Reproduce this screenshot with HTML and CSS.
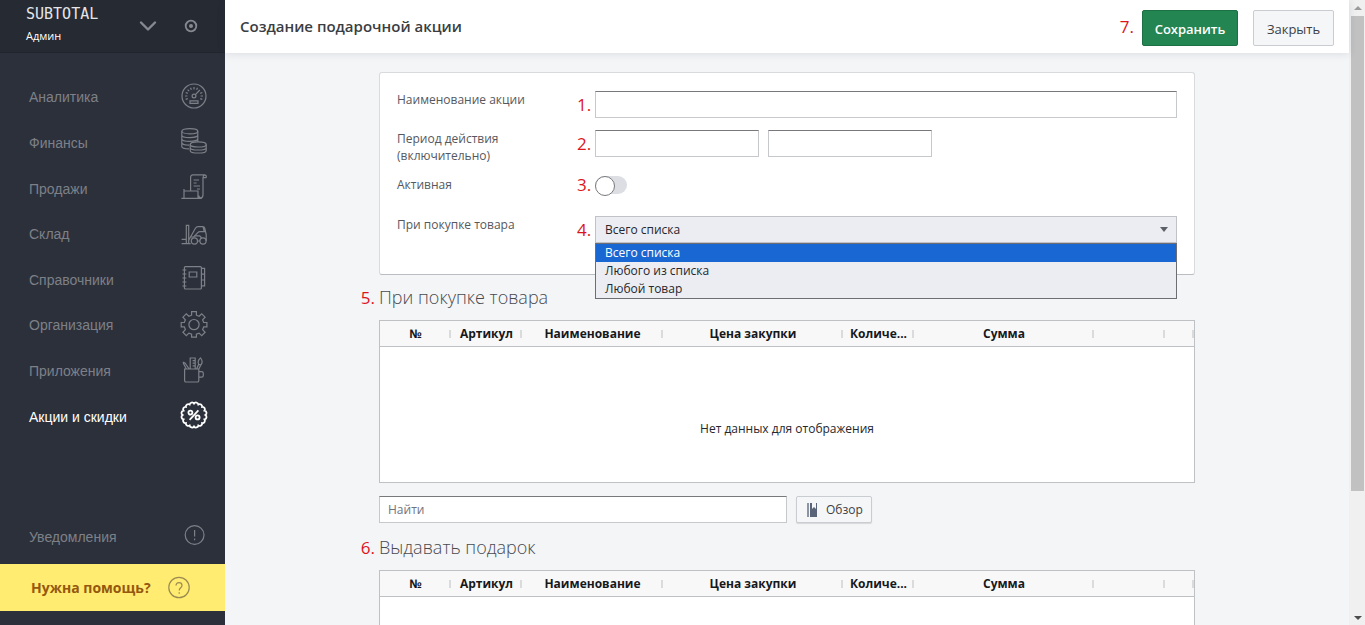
FILE: index.html
```html
<!DOCTYPE html>
<html lang="ru">
<head>
<meta charset="utf-8">
<meta name="viewport" content="width=device-width, initial-scale=1">
<title>Создание подарочной акции</title>
<link rel="stylesheet" href="styles.css">
</head>
<body>
<div class="app">
  <aside class="sidebar">
    <div class="account">
      <div class="account-name">
        <span class="brand">SUBTOTAL</span>
        <span class="user">Админ</span>
      </div>
      <button class="icon-button" type="button" aria-label="Меню аккаунта">
        <svg width="18" height="12" viewBox="0 0 18 12"><path d="M2 2.5l7 7 7-7" fill="none" stroke="currentColor" stroke-width="2.4" stroke-linecap="round" stroke-linejoin="round"/></svg>
      </button>
      <button class="icon-button" type="button" aria-label="Статус">
        <svg width="14" height="14" viewBox="0 0 14 14"><circle cx="7" cy="7" r="5.3" fill="none" stroke="currentColor" stroke-width="1.8"/><circle cx="7" cy="7" r="2" fill="currentColor"/></svg>
      </button>
    </div>
    <nav class="menu">
      <a class="menu-item" href="#">Аналитика
        <svg class="menu-icon" viewBox="0 0 28 28"><circle cx="14" cy="14" r="12"/><circle cx="14" cy="14" r="1.9"/><path d="M15.4 12.6l4.4-4.6M10 18.8h8v2.6h-8zM5 14h2.4M20.6 14H23M14 5v2.4M7.6 7.6l1.6 1.6M5.7 10.5l2.1.9M10.5 5.7l.9 2.1M17.5 5.7l-.9 2.1M22.3 10.5l-2.1.9M5.7 17.4l2.1-.8M22.3 17.4l-2.1-.8"/></svg>
      </a>
      <a class="menu-item" href="#">Финансы
        <svg class="menu-icon" viewBox="0 0 28 28"><ellipse cx="9.8" cy="4.2" rx="8" ry="2.6"/><path d="M1.8 4.2v15.2c0 1.4 3.2 2.4 7.2 2.5M17.8 4.2v10.6M1.8 8c0 1.5 3.6 2.6 8 2.6s8-1.1 8-2.6M1.8 11.8c0 1.5 3.6 2.6 8 2.6s8-1.1 8-2.6M1.8 15.6c0 1.5 3.6 2.6 7.4 2.6"/><ellipse cx="18.2" cy="17.4" rx="8" ry="2.6"/><path d="M10.2 17.4v6c0 1.5 3.6 2.6 8 2.6s8-1.1 8-2.6v-6M10.2 20.4c0 1.5 3.6 2.6 8 2.6s8-1.1 8-2.6"/></svg>
      </a>
      <a class="menu-item" href="#">Продажи
        <svg class="menu-icon" viewBox="0 0 28 28"><path d="M10.6 18V4.5c0-1.6.8-2.7 2.2-2.7h12c-1.3.3-1.8 1.4-1.8 3v17c0 2-.8 3-2.2 3-1.3 0-2-1-2-2.4M26.4 4.6c0-1.7-.6-2.8-1.8-2.8M26.4 4.6H23M13.6 7h5.4M13.6 10h3M13.6 13h6.4M17 16h3M4 18h14v7.4H4zM4 18v-2M1.4 25.4H22"/></svg>
      </a>
      <a class="menu-item" href="#">Склад
        <svg class="menu-icon" viewBox="0 0 28 28"><path d="M6.3 6.400h2.400v18.200H6.300zM1.600 24.600h7M1.600 20.400h4.700M8.700 21.300l6.700-12c.7-1.200 1.500-1.700 2.800-1.700h4.500c1.100 0 1.800.6 2.100 1.700l1.400 6.300V22M10.800 18h3l4-4.400c.7-.8 1.300-1 2.200-1H26M23.200 8l1 4.600M8.700 21.300v3.300h2"/><circle cx="14.400" cy="22" r="3.100"/><circle cx="23" cy="22" r="3.100"/><path d="M14.400 16.800h5.300l2 2.200M17.500 22h2.400"/></svg>
      </a>
      <a class="menu-item" href="#">Справочники
        <svg class="menu-icon" viewBox="0 0 28 28"><rect x="4.4" y="2.6" width="17" height="22.4" rx="1"/><path d="M9.2 8h7.6v5H9.2zM2.4 6h4M2.4 10h4M2.4 14h4M2.4 18h4M2.4 22h4M21.4 4.4h3.2v17.4h-3.2M21.4 10.2h3.2M21.4 16h3.2"/></svg>
      </a>
      <a class="menu-item" href="#">Организация
        <svg class="menu-icon" viewBox="0 0 28 28"><path d="M11.600 1.600h4.800v3.600l2.700 1.100 2.600-2.500 3.400 3.400-2.500 2.600 1.100 2.700h3.200v4.400h-3.200l-1.100 2.800 2.500 2.600-3.400 3.300-2.600-2.500-2.700 1.100v3h-4.800v-3l-2.700-1.100-2.600 2.500-3.400-3.300 2.500-2.600-1.100-2.800H1.200v-4.400h3.100l1.100-2.700-2.500-2.600 3.400-3.400 2.600 2.500 2.700-1.100z"/><circle cx="14" cy="14.600" r="5.100"/></svg>
      </a>
      <a class="menu-item" href="#">Приложения
        <svg class="menu-icon" viewBox="0 0 28 28"><path d="M4.6 13h14.2v11.4c0 1-.5 1.6-1.5 1.6H6.1c-1 0-1.5-.6-1.5-1.6zM18.8 15.6h2.8c1.1 0 1.7.6 1.7 1.7v2.2c0 1.1-.6 1.7-1.7 1.7h-2.8M6.4 13L3.4 7.4v-1L5 7l4.2 6M10.2 13V2h5v11M12.6 4.6h2.6M12.6 7.2h2.6M12.6 9.8h2.6M16.6 13l2-4.6M18.6 8.4c-1-2.6.4-5.2 2-6.4 1.4 1.8 2.2 4.4.4 6.8zM21 8.8L18.8 13"/></svg>
      </a>
      <a class="menu-item menu-item-active" href="#">Акции и скидки
        <svg class="menu-icon" viewBox="0 0 28 28"><path d="M25.4 14A2.400 2.400 0 0 1 24.500 18.400A2.400 2.400 0 0 1 22.100 22.100A2.400 2.400 0 0 1 18.400 24.500A2.400 2.400 0 0 1 14 25.400A2.400 2.400 0 0 1 9.600 24.500A2.400 2.400 0 0 1 5.900 22.100A2.400 2.400 0 0 1 3.500 18.400A2.400 2.400 0 0 1 2.600 14A2.400 2.400 0 0 1 3.500 9.600A2.400 2.400 0 0 1 5.900 5.900A2.400 2.400 0 0 1 9.600 3.500A2.400 2.400 0 0 1 14 2.600A2.400 2.400 0 0 1 18.400 3.500A2.400 2.400 0 0 1 22.100 5.900A2.400 2.400 0 0 1 24.500 9.600A2.400 2.400 0 0 1 25.400 14z"/><circle cx="10.400" cy="11.600" r="2"/><circle cx="17.600" cy="16.400" r="2"/><path d="M18.400 9.400l-8.800 9.400"/></svg>
      </a>
    </nav>
    <a class="menu-item notifications" href="#">Уведомления
      <svg class="menu-icon" viewBox="0 0 28 28"><circle cx="14.6" cy="14" r="9.4"/><path d="M14.6 9v6.6M14.6 17.6v1.6"/></svg>
    </a>
    <a class="help" href="#">Нужна помощь?
      <svg class="help-icon" viewBox="0 0 24 24"><circle cx="12" cy="11.500" r="10.200"/><path d="M9 9.600c0-1.800 1.200-3 3-3s3 1.100 3 2.800c0 2.400-2.800 2.400-2.800 5.100M12.200 16.300v1.500"/></svg>
    </a>
  </aside>

  <main class="main">
    <header class="topbar">
      <h1 class="title">Создание подарочной акции</h1>
      <span class="mark mark-inline">7.</span>
      <button class="button button-primary" type="button">Сохранить</button>
      <button class="button button-close" type="button">Закрыть</button>
    </header>

    <div class="content">
      <form class="card">
        <label class="label" for="name">Наименование акции</label>
        <span class="mark">1.</span>
        <input class="input" id="name" type="text">

        <label class="label" for="from">Период действия<br>(включительно)</label>
        <span class="mark">2.</span>
        <div class="period">
          <input class="input" id="from" type="text">
          <input class="input" type="text" aria-label="Окончание периода">
        </div>

        <label class="label" for="active">Активная</label>
        <span class="mark mark-toggle">3.</span>
        <div class="toggle-cell"><input class="toggle" id="active" type="checkbox" role="switch"></div>

        <label class="label" for="condition">При покупке товара</label>
        <span class="mark">4.</span>
        <div class="dropdown">
          <select class="select" id="condition">
            <option>Всего списка</option>
            <option>Любого из списка</option>
            <option>Любой товар</option>
          </select>
          <svg class="select-arrow" viewBox="0 0 8 5"><path d="M0 0h8L4 5z"/></svg>
          <ul class="options" role="listbox" aria-label="При покупке товара">
            <li class="option option-selected" role="option" aria-selected="true">Всего списка</li>
            <li class="option" role="option" aria-selected="false">Любого из списка</li>
            <li class="option" role="option" aria-selected="false">Любой товар</li>
          </ul>
        </div>
      </form>

      <section class="section">
        <h2 class="heading"><span class="mark mark-outside">5.</span>При покупке товара</h2>
        <table class="grid">
          <colgroup><col class="col-s"><col class="col-s"><col class="col-m"><col class="col-l"><col class="col-s"><col class="col-l"><col class="col-s"><col></colgroup>
          <thead><tr><th>№</th><th>Артикул</th><th>Наименование</th><th>Цена закупки</th><th>Количе...</th><th>Сумма</th><th></th><th></th></tr></thead>
          <tbody><tr><td colspan="8">Нет данных для отображения</td></tr></tbody>
        </table>
        <div class="search">
          <input class="input" type="search" placeholder="Найти" aria-label="Найти">
          <button class="button button-browse" type="button">
            <svg width="12" height="14" viewBox="0 0 12 14"><path d="M1 0h2v14H1z" fill="#8b95a5"/><path d="M4 0h2v6l2-2 2 2V0h1v14H4z" fill="#5a6579"/></svg>
            Обзор
          </button>
        </div>
      </section>

      <section class="section">
        <h2 class="heading"><span class="mark mark-outside">6.</span>Выдавать подарок</h2>
        <table class="grid">
          <colgroup><col class="col-s"><col class="col-s"><col class="col-m"><col class="col-l"><col class="col-s"><col class="col-l"><col class="col-s"><col></colgroup>
          <thead><tr><th>№</th><th>Артикул</th><th>Наименование</th><th>Цена закупки</th><th>Количе...</th><th>Сумма</th><th></th><th></th></tr></thead>
          <tbody><tr><td colspan="8"></td></tr></tbody>
        </table>
      </section>
    </div>
  </main>

  <div class="scrollbar" aria-hidden="true">
    <svg class="scroll-arrow scroll-arrow-up" viewBox="0 0 8 4"><path d="M0 4h8L4 0z"/></svg>
    <div class="scroll-track"><div class="scroll-thumb"></div></div>
    <svg class="scroll-arrow" viewBox="0 0 8 4"><path d="M0 0h8L4 4z"/></svg>
  </div>
</div>
</body>
</html>
```
FILE: styles.css
```css
* {
  box-sizing: border-box;
}

body {
  margin: 0;
  font: 12px/17px "Open Sans", "Noto Sans", sans-serif;
  color: #24272d;
  background: #f4f5f7;
}

button,
input,
select {
  font: inherit;
  color: inherit;
}

a {
  text-decoration: none;
}

.app {
  display: grid;
  grid-template-columns: 225px minmax(0, 1fr) 16px;
  height: 100vh;
  overflow: hidden;
}

/* Sidebar */

.sidebar {
  display: flex;
  flex-direction: column;
  min-height: 0;
  background: #2c303b;
  font-family: "Liberation Sans", Arial, sans-serif;
}

.account {
  display: flex;
  align-items: center;
  gap: 27px;
  height: 53px;
  padding: 0 27px 0 26px;
  background: #262a33;
  border-bottom: 1px solid #22252e;
}

.account-name {
  display: flex;
  flex: 1;
  flex-direction: column;
  gap: 4px;
  padding-bottom: 3px;
  color: #fff;
}

.brand {
  font: 15px/17px "DejaVu Sans Mono", monospace;
  color: #e4e5e8;
}

.user {
  font: 11px/17px "Open Sans", sans-serif;
}

.icon-button {
  display: flex;
  padding: 0;
  border: 0;
  background: none;
  color: #868990;
}

.menu {
  display: flex;
  flex-direction: column;
  height: 365px;
  margin-top: 22px;
}

.menu-item {
  display: flex;
  flex: 1;
  align-items: center;
  justify-content: space-between;
  padding: 0 17px 0 29px;
  font-size: 14px;
  color: #7d8087;
}

.menu-item-active {
  color: #fff;
}

.menu-icon {
  width: 28px;
  height: 28px;
  margin-bottom: 4px;
  fill: none;
  stroke: currentColor;
  stroke-width: 1.2;
}

.menu-item-active .menu-icon {
  stroke-width: 1.8;
}

.notifications {
  flex: none;
  height: 54px;
  margin-top: auto;
}

.help {
  display: flex;
  align-items: center;
  gap: 16px;
  height: 47px;
  margin-bottom: 14px;
  padding-left: 31px;
  background: #ffec70;
  font: 700 14px/17px "Open Sans", sans-serif;
  color: #95580f;
}

.help-icon {
  width: 24px;
  height: 24px;
  fill: none;
  stroke: #9b8b52;
  stroke-width: 1.2;
}

/* Main column */

.main {
  display: flex;
  flex-direction: column;
  min-height: 0;
}

.topbar {
  display: flex;
  flex: none;
  align-items: center;
  height: 53px;
  padding: 0 15px;
  background: #fff;
  box-shadow: 0 1px 8px rgba(40, 50, 70, 0.12);
  z-index: 1;
}

.title {
  flex: 1;
  margin: 0;
  font-size: 15px;
  font-weight: 600;
  color: #3a3d42;
}

.mark {
  font-size: 17px;
  line-height: 27px;
  color: #dc141c;
}

.mark-inline {
  margin-right: 8px;
}

.button {
  display: flex;
  align-items: center;
  justify-content: center;
  border: 1px solid #c9ccd0;
  border-radius: 2px;
  background: #f5f6f8;
  color: #3c3f45;
}

.button-primary,
.button-close {
  height: 36px;
  margin-top: 3px;
  padding: 2px 11px 0;
  font-size: 13px;
}

.button-primary {
  min-width: 96px;
  margin-right: 15px;
  border-color: #1d7044;
  background: #238551;
  font-weight: 600;
  color: #fff;
}

.button-close {
  min-width: 81px;
}

.content {
  flex: 1;
  min-height: 0;
  width: 100%;
  max-width: 856px;
  margin: 0 auto;
  padding: 19px 20px 0;
}

.card {
  display: grid;
  grid-template-columns: 180px 18px minmax(0, 1fr);
  row-gap: 12px;
  padding: 18px 17px 31px;
  border: 1px solid #d8dadd;
  border-bottom-color: #b9bcc0;
  border-radius: 3px;
  background: #fff;
}

.label {
  color: #55585e;
}

.input {
  display: block;
  width: 100%;
  height: 27px;
  padding: 0 8px;
  border: 1px solid #c6c8cb;
  border-top-color: #77797d;
  border-radius: 0;
  background: #fff;
  outline: 0;
}

.input::placeholder {
  color: #70737b;
  opacity: 1;
}

.period {
  display: grid;
  grid-template-columns: 164px 164px;
  gap: 9px;
}

.toggle-cell,
.mark-toggle {
  height: 28px;
}

.mark-toggle {
  line-height: 17px;
}

.toggle {
  display: flex;
  appearance: none;
  width: 32px;
  height: 18px;
  margin: 0;
  border-radius: 9px;
  background: #dcdee3;
}

.toggle::before {
  content: "";
  width: 18px;
  height: 18px;
  border: 1px solid #77797d;
  border-radius: 50%;
  background: #fff;
}

.dropdown {
  position: relative;
}

.select {
  display: block;
  appearance: none;
  width: 100%;
  height: 27px;
  padding: 0 9px;
  border: 1px solid #c0c2c7;
  border-radius: 0;
  background: #ecedf2;
}

.select-arrow {
  position: absolute;
  top: 11px;
  right: 9px;
  width: 8px;
  height: 5px;
  fill: #5d6068;
  pointer-events: none;
}

.options {
  position: absolute;
  top: 100%;
  left: 0;
  right: 0;
  margin: 0;
  padding: 0;
  border: 1px solid #6c6e74;
  background: #ecedf2;
  list-style: none;
}

.option {
  padding: 0 9px;
  line-height: 18px;
}

.option-selected {
  background: #1967d2;
  color: #fff;
}

.heading {
  position: relative;
  margin: 0;
  font-size: 18px;
  font-weight: 300;
  line-height: 45px;
  color: #484b50;
}

.mark-outside {
  position: absolute;
  right: 100%;
  padding-right: 4px;
  font-weight: 400;
  line-height: inherit;
}

.grid {
  width: 100%;
  table-layout: fixed;
  border: 1px solid #bfc2c5;
  border-spacing: 0;
  background: #fff;
}

.col-s {
  width: 71px;
}

.col-m {
  width: 141px;
}

.col-l {
  width: 180px;
}

.grid th {
  position: relative;
  height: 26px;
  padding: 0;
  border-bottom: 1px solid #bfc2c5;
  background: #f8f8f8;
  font-weight: 700;
  color: #16181c;
  white-space: nowrap;
}

.grid th::after {
  content: "";
  position: absolute;
  top: 9px;
  right: 0;
  width: 2px;
  height: 8px;
  background: #dadbdd;
}

.grid td {
  height: 135px;
  padding: 28px 0 0;
  text-align: center;
}

.search {
  display: grid;
  grid-template-columns: 1fr 1fr;
  margin: 13px 0 2px;
}

.button-browse {
  gap: 8px;
  justify-self: start;
  height: 27px;
  margin-left: 9px;
  padding: 0 8px 0 9px;
  box-shadow: 0 1px 1px rgba(0, 0, 0, 0.12);
}

/* Scrollbar */

.scrollbar {
  display: flex;
  flex-direction: column;
  align-items: center;
  padding: 6px 1px 5px 2px;
  gap: 6px;
  background: #f0f0f0;
}

.scroll-arrow {
  width: 8px;
  height: 4px;
  fill: #4c4c4c;
}

.scroll-arrow-up {
  fill: #9b9b9b;
}

.scroll-track {
  flex: 1;
  width: 100%;
}

.scroll-thumb {
  height: 80%;
  background: #c1c1c1;
}
```
